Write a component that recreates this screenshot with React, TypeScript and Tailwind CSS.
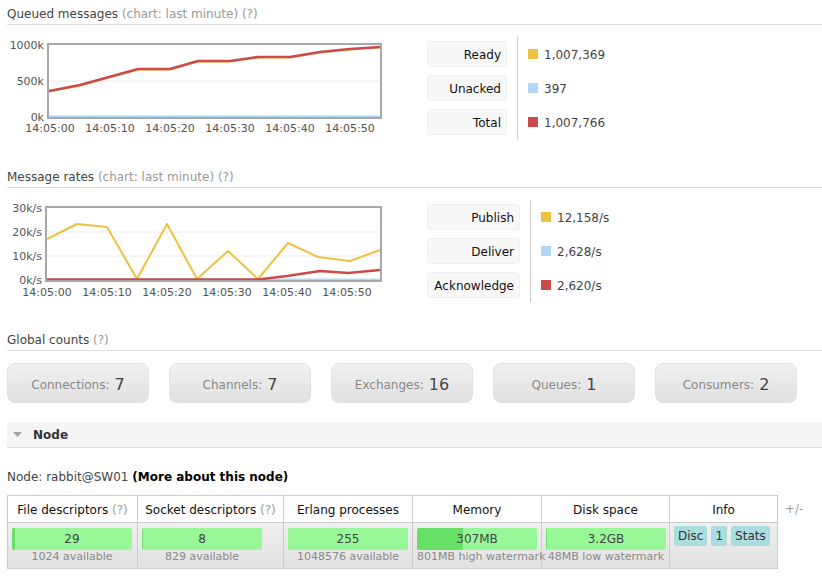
import React from "react";

type LegendItem = { label: string; value: string; color: string };

function Heading({ title, sub, className }: { title: string; sub: string; className: string }) {
  return (
    <div className={`pt-[7px] pb-[2px] leading-[15px] text-[12px] text-[#444] border-b border-[#dedede] ${className}`}>
      {title} <span className="text-[#999]">{sub}</span>
    </div>
  );
}

function Legend({ labelW, items }: { labelW: string; items: LegendItem[] }) {
  return (
    <div className="flex ml-[20px]">
      <div className="flex flex-col gap-[8px] py-[4px]">
        {items.map((it) => (
          <div
            key={it.label}
            className={`h-[26px] ${labelW} bg-[#f8f8f8] border border-[#efefef] rounded-[3px] px-[5px] pt-[1px] flex items-center justify-end text-[#111] text-[12px]`}
          >
            {it.label}
          </div>
        ))}
      </div>
      <div className="ml-[10px] border-l border-[#cfcfcf] pl-[10px] flex flex-col gap-[8px] py-[4px]">
        {items.map((it) => (
          <div key={it.label} className="h-[26px] flex items-center text-[12px] text-[#444]">
            <span className={`inline-block w-[10px] h-[10px] mr-[6px] ${it.color}`} />
            <span className="pt-[1px]">{it.value}</span>
          </div>
        ))}
      </div>
    </div>
  );
}

const xLabels = ["14:05:00", "14:05:10", "14:05:20", "14:05:30", "14:05:40", "14:05:50"];

function QueuedChart() {
  const red = "49,91 80,85 138,69 170,69 198,61 230,61 258,57 290,57 320,52 350,49 380,47";
  const yellow = "49,91.5 80,85.5 138,69.5 170,69.5 198,61.5 230,61.5 258,57.5 290,57.5 320,52.5 350,49.5 380,47.5";
  return (
    <svg width="400" height="102" viewBox="7 37 400 102" className="block shrink-0">
      <line x1="48" x2="381" y1="81" y2="81" stroke="#ececec" strokeWidth="1" />
      <polyline points="49,116.5 381,116.5" fill="none" stroke="#afd8f8" strokeWidth="2" />
      <polyline points={yellow} fill="none" stroke="#edc240" strokeWidth="2" strokeLinejoin="round" />
      <polyline points={red} fill="none" stroke="#cb4b4b" strokeWidth="2.6" strokeLinejoin="round" />
      <rect x="48" y="44" width="333" height="74" fill="none" stroke="#a8a8a8" strokeWidth="2" />
      {[
        ["1000k", 45],
        ["500k", 81],
        ["0k", 117],
      ].map(([t, y]) => (
        <text key={t as string} x="44" y={y as number} textAnchor="end" dominantBaseline="central" fontSize="11" fill="#545454">
          {t}
        </text>
      ))}
      {xLabels.map((t, i) => (
        <text key={t} x={50 + i * 60} y="128.5" textAnchor="middle" dominantBaseline="central" fontSize="11" fill="#545454">
          {t}
        </text>
      ))}
    </svg>
  );
}

function RatesChart() {
  const yellow = "47,239 77,224 107,227 137,279 167,224 197,279 228,251 258,279 288,243 318,257 350,261 380,250";
  const red = "47,279.5 258,279.5 287,276 320,271 348,273 380,270";
  return (
    <svg width="400" height="102" viewBox="7 200 400 102" className="block shrink-0">
      <line x1="46" x2="381" y1="232" y2="232" stroke="#ececec" strokeWidth="1" />
      <line x1="46" x2="381" y1="256" y2="256" stroke="#ececec" strokeWidth="1" />
      <polyline points="47,279.5 380,279.5" fill="none" stroke="#afd8f8" strokeWidth="2" />
      <polyline points={yellow} fill="none" stroke="#edc240" strokeWidth="2" strokeLinejoin="round" />
      <polyline points={red} fill="none" stroke="#cb4b4b" strokeWidth="2.6" strokeLinejoin="round" />
      <rect x="46" y="207" width="335" height="74" fill="none" stroke="#a8a8a8" strokeWidth="2" />
      {[
        ["30k/s", 208],
        ["20k/s", 232],
        ["10k/s", 256],
        ["0k/s", 280],
      ].map(([t, y]) => (
        <text key={t as string} x="42" y={y as number} textAnchor="end" dominantBaseline="central" fontSize="11" fill="#545454">
          {t}
        </text>
      ))}
      {xLabels.map((t, i) => (
        <text key={t} x={47 + i * 60} y="292" textAnchor="middle" dominantBaseline="central" fontSize="11" fill="#545454">
          {t}
        </text>
      ))}
    </svg>
  );
}

function CountBox({ label, value }: { label: string; value: string }) {
  return (
    <div className="w-[142px] h-[40px] rounded-[8px] border border-[#e2e2e2] bg-linear-to-b from-[#f0f0f0] to-[#e1e1e1] flex items-center justify-center pt-[3px]">
      <span className="text-[12px] text-[#888]">{label}:</span>
      <span className="text-[16px] text-[#444] ml-[5px] leading-[20px]">{value}</span>
    </div>
  );
}

function Bar({ value, fill, sub }: { value: string; fill: number; sub: string }) {
  return (
    <div className="pt-[5px] px-[4px]">
      <div className="relative w-[120px] h-[22px] bg-[#98f898] rounded-[2px] overflow-hidden">
        <div className="absolute left-0 top-0 bottom-0 bg-[#68e068]" style={{ width: `${fill}px` }} />
        <div className="relative text-center leading-[22px] text-[12px] text-[#444]">{value}</div>
      </div>
      <div className="relative z-10 w-[120px] mt-[1px] text-center whitespace-nowrap leading-[12px] text-[11px] text-[#8a8a8a]">{sub}</div>
    </div>
  );
}

export default function App() {
  return (
    <div className="w-[822px] h-[579px] overflow-hidden bg-white pl-[7px] font-['DejaVu_Sans',Verdana,sans-serif] text-[12px] text-[#444]">
      <Heading title="Queued messages" sub="(chart: last minute) (?)" className="" />
      <div className="flex mt-[12px]">
        <QueuedChart />
        <Legend
          labelW="w-[80px]"
          items={[
            { label: "Ready", value: "1,007,369", color: "bg-[#edc240]" },
            { label: "Unacked", value: "397", color: "bg-[#afd8f8]" },
            { label: "Total", value: "1,007,766", color: "bg-[#cb4b4b]" },
          ]}
        />
      </div>

      <Heading title="Message rates" sub="(chart: last minute) (?)" className="mt-[24px]" />
      <div className="flex mt-[12px]">
        <RatesChart />
        <Legend
          labelW="w-[93px]"
          items={[
            { label: "Publish", value: "12,158/s", color: "bg-[#edc240]" },
            { label: "Deliver", value: "2,628/s", color: "bg-[#afd8f8]" },
            { label: "Acknowledge", value: "2,620/s", color: "bg-[#cb4b4b]" },
          ]}
        />
      </div>

      <Heading title="Global counts" sub="(?)" className="mt-[24px]" />
      <div className="flex gap-[20px] mt-[12px]">
        <CountBox label="Connections" value="7" />
        <CountBox label="Channels" value="7" />
        <CountBox label="Exchanges" value="16" />
        <CountBox label="Queues" value="1" />
        <CountBox label="Consumers" value="2" />
      </div>

      <div className="mt-[19px] h-[26px] bg-[#f5f5f5] border-b border-[#dcdcdc] flex items-center pl-[6px]">
        <svg width="9" height="6" viewBox="0 0 9 6" className="block">
          <polygon points="0,0 9,0 4.5,5" fill="#a0a0a0" />
        </svg>
        <span className="ml-[11px] pt-[1px] font-bold text-[12px] text-[#333]">Node</span>
      </div>

      <div className="mt-[21px] pt-[1px] leading-[15px] text-[12px] text-[#444]">
        Node: rabbit@SW01 <span className="font-bold text-[#000]">(More about this node)</span>
      </div>

      <div className="flex items-start mt-[10px]">
        <div className="grid grid-cols-[130px_146px_129px_129px_128px_108px] border-l border-t border-[#ccc]">
          {[
            <span>File descriptors <span className="text-[#999]">(?)</span></span>,
            <span>Socket descriptors <span className="text-[#999]">(?)</span></span>,
            <span>Erlang processes</span>,
            <span>Memory</span>,
            <span>Disk space</span>,
            <span>Info</span>,
          ].map((h, i) => (
            <div key={i} className="h-[27px] pt-[1px] border-r border-b border-[#ccc] bg-white flex items-center justify-center text-[12px] text-[#111] whitespace-nowrap">
              {h}
            </div>
          ))}
          <div className="h-[46px] border-r border-b border-[#ccc] bg-linear-to-b from-[#efefef] to-[#e2e2e2]">
            <Bar value="29" fill={3} sub="1024 available" />
          </div>
          <div className="h-[46px] border-r border-b border-[#ccc] bg-linear-to-b from-[#efefef] to-[#e2e2e2]">
            <Bar value="8" fill={1} sub="829 available" />
          </div>
          <div className="h-[46px] border-r border-b border-[#ccc] bg-linear-to-b from-[#efefef] to-[#e2e2e2]">
            <Bar value="255" fill={0} sub="1048576 available" />
          </div>
          <div className="relative z-10 h-[46px] border-r border-b border-[#ccc] bg-linear-to-b from-[#efefef] to-[#e2e2e2]">
            <Bar value="307MB" fill={46} sub="801MB high watermark" />
          </div>
          <div className="h-[46px] border-r border-b border-[#ccc] bg-linear-to-b from-[#efefef] to-[#e2e2e2]">
            <Bar value="3.2GB" fill={1} sub="48MB low watermark" />
          </div>
          <div className="h-[46px] border-r border-b border-[#ccc] bg-linear-to-b from-[#efefef] to-[#e2e2e2] pt-[3px] pl-[4px] flex items-start gap-[4px]">
            {["Disc", "1", "Stats"].map((b) => (
              <span key={b} className="h-[20px] px-[4px] bg-[#aadddd] rounded-[2px] leading-[21px] text-[12px] text-[#333]">
                {b}
              </span>
            ))}
          </div>
        </div>
        <div className="ml-[7px] h-[27px] pt-[1px] flex items-center text-[12px] text-[#999]">+/-</div>
      </div>
    </div>
  );
}
